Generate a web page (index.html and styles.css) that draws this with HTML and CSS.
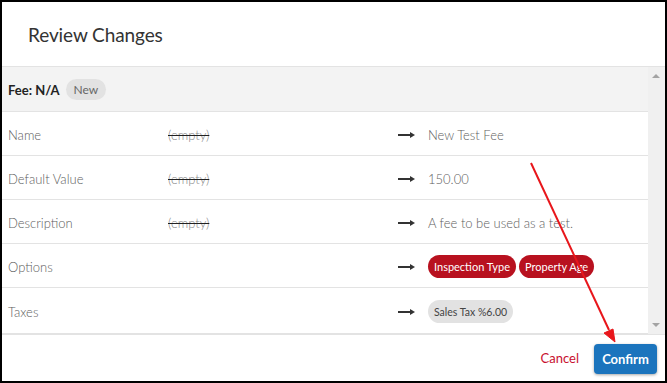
FILE: index.html
```html
<!DOCTYPE html>
<html lang="en">
<head>
  <meta charset="UTF-8" />
  <title>Review Changes</title>
  <link rel="stylesheet" href="styles.css">
</head>
<body>
  <div class="dialog">
    <div class="dialog-header">
      <h1>Review Changes</h1>
    </div>

    <div class="dialog-body">
      <div class="changes">
        <div class="entity-row">
          <strong>Fee: N/A</strong>
          <span class="pill pill-grey">New</span>
        </div>

        <div class="change-row">
          <span class="label">Name</span>
          <span class="old">(empty)</span>
          <span class="arrow"><svg width="17" height="8" viewBox="0 0 17 8"><path d="M0 4h13" stroke="#333" stroke-width="2"/><path d="M12 1l5 3-5 3z" fill="#333"/></svg></span>
          <span class="new">New Test Fee</span>
        </div>
        <div class="change-row">
          <span class="label">Default Value</span>
          <span class="old">(empty)</span>
          <span class="arrow"><svg width="17" height="8" viewBox="0 0 17 8"><path d="M0 4h13" stroke="#333" stroke-width="2"/><path d="M12 1l5 3-5 3z" fill="#333"/></svg></span>
          <span class="new">150.00</span>
        </div>
        <div class="change-row">
          <span class="label">Description</span>
          <span class="old">(empty)</span>
          <span class="arrow"><svg width="17" height="8" viewBox="0 0 17 8"><path d="M0 4h13" stroke="#333" stroke-width="2"/><path d="M12 1l5 3-5 3z" fill="#333"/></svg></span>
          <span class="new">A fee to be used as a test.</span>
        </div>
        <div class="change-row">
          <span class="label">Options</span>
          <span class="old"></span>
          <span class="arrow"><svg width="17" height="8" viewBox="0 0 17 8"><path d="M0 4h13" stroke="#333" stroke-width="2"/><path d="M12 1l5 3-5 3z" fill="#333"/></svg></span>
          <span class="new tags">
            <span class="pill pill-red">Inspection Type</span>
            <span class="pill pill-red">Property Age</span>
          </span>
        </div>
        <div class="change-row tall">
          <span class="label">Taxes</span>
          <span class="old"></span>
          <span class="arrow"><svg width="17" height="8" viewBox="0 0 17 8"><path d="M0 4h13" stroke="#333" stroke-width="2"/><path d="M12 1l5 3-5 3z" fill="#333"/></svg></span>
          <span class="new tags">
            <span class="pill pill-grey small">Sales Tax %6.00</span>
          </span>
        </div>
      </div>

      <div class="scrollbar">
        <span class="scroll-up"></span>
        <span class="scroll-down"></span>
      </div>
    </div>

    <div class="dialog-footer">
      <a class="btn-link" href="#">Cancel</a>
      <button type="button" class="btn-primary">Confirm</button>
    </div>
  </div>

  <!-- annotation arrow drawn over the screenshot -->
  <svg class="annotation" width="667" height="383" viewBox="0 0 667 383">
    <g fill="#e8161b" stroke="#e8161b">
      <path d="M531 163L609 330" stroke-width="2" fill="none"/>
      <path d="M615 342l-11-9 9-4z" stroke-width="1"/>
    </g>
  </svg>
</body>
</html>
```

FILE: styles.css
```css
body {
  margin: 0;
  width: 667px;
  height: 383px;
  font-family: Lato, 'Open Sans', sans-serif;
  background: #000;
  position: relative;
  overflow: hidden;
}

.dialog {
  box-sizing: border-box;
  width: 667px;
  height: 383px;
  border: 2px solid #000;
  background: #fff;
  display: flex;
  flex-direction: column;
}

.dialog-header {
  height: 64px;
  flex: none;
  display: flex;
  align-items: center;
  padding-left: 26px;
  border-bottom: 1px solid #e3e3e3;
}

.dialog-header h1 {
  margin: 0;
  font-size: 19px;
  font-weight: 400;
  color: #333;
  letter-spacing: -0.1px;
}

.dialog-body {
  flex: 1;
  display: flex;
  min-height: 0;
}

.changes {
  flex: 1;
}

.entity-row {
  height: 43px;
  padding-top: 1px;
  display: flex;
  align-items: center;
  gap: 6px;
  padding-left: 6px;
  background: #f3f3f3;
  border-bottom: 1px solid #e3e3e3;
  font-size: 13px;
  color: #222;
}

.change-row {
  height: 41px;
  padding-top: 2px;
  display: grid;
  grid-template-columns: 160px 230px 30px 1fr;
  align-items: center;
  padding-left: 6px;
  border-bottom: 1px solid #e3e3e3;
  font-size: 13px;
  font-weight: 300;
}

.change-row.tall {
  height: 43px;
}

.label {
  color: #5e5e5e;
}

.old {
  color: #888;
  text-decoration: line-through;
  text-decoration-color: #222;
}

.arrow svg {
  display: block;
}

.new {
  color: #5e5e5e;
}

.tags {
  display: flex;
  gap: 3px;
}

.pill {
  display: inline-flex;
  align-items: center;
  height: 21px;
  padding: 0 8px;
  border-radius: 11px;
  font-size: 12px;
  font-weight: 400;
}

.pill-grey {
  background: #e2e2e2;
  color: #666;
}

.pill-grey.small {
  height: 23px;
  font-size: 10.5px;
  color: #444;
  padding: 0 6px;
  border-radius: 12px;
}

.pill-red {
  height: 23px;
  padding: 0 6px;
  background: #b8111f;
  color: #fff;
  border-radius: 12px;
  font-size: 11px;
}

.scrollbar {
  width: 17px;
  flex: none;
  background: #f0f0f0;
  position: relative;
}

.scroll-up,
.scroll-down {
  position: absolute;
  left: 4px;
  width: 0;
  height: 0;
  border-left: 4px solid transparent;
  border-right: 4px solid transparent;
}

.scroll-up {
  top: 7px;
  border-bottom: 4px solid #a3a3a3;
}

.scroll-down {
  bottom: 7px;
  border-top: 4px solid #a3a3a3;
}

.dialog-footer {
  flex: none;
  height: 46px;
  display: flex;
  align-items: center;
  justify-content: flex-end;
  gap: 15px;
  padding-right: 8px;
  border-top: 1px solid #e3e3e3;
}

.btn-link {
  color: #c8102e;
  text-decoration: none;
  font-size: 13px;
}

.btn-primary {
  width: 63px;
  height: 30px;
  background: #1b74bd;
  color: #fff;
  border: none;
  border-radius: 4px;
  font-family: inherit;
  font-size: 13px;
  font-weight: 700;
  box-shadow: 0 1px 3px rgba(0, 0, 0, 0.35);
  margin-top: 2px;
}

.annotation {
  position: absolute;
  left: 0;
  top: 0;
  pointer-events: none;
}
```
